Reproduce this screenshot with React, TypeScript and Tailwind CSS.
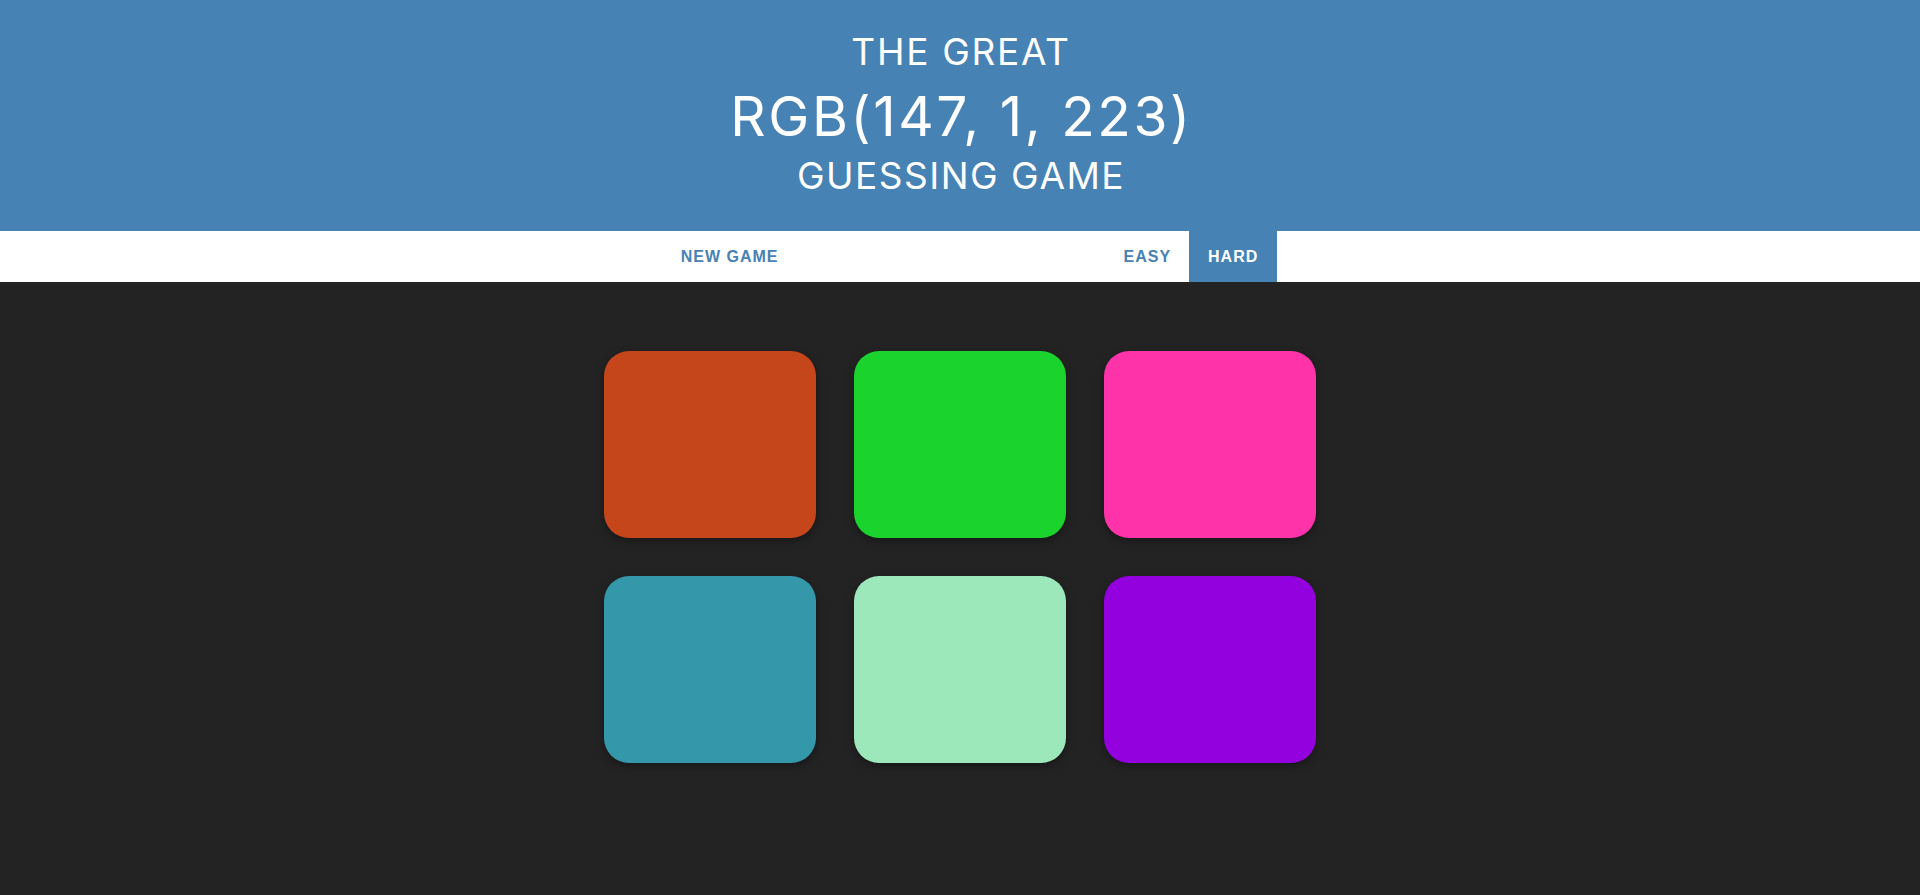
const squares = ["#c5461b", "#1ad32c", "#fe32a9", "#3597aa", "#9de8bb", "#9301df"]

export default function App() {
  return (
    <div className="min-h-[895px] bg-[#232323]">
      <h1 className="h-[231px] bg-[#4682b4] pt-[30px] text-center font-normal uppercase text-white [font-family:Inter,'Liberation_Sans',sans-serif]">
        <span className="block pl-[2px] text-[37px] leading-[44px] tracking-[1.7px]">The Great</span>
        <span className="block pl-[3px] text-[55px] leading-[85px] tracking-[2.6px]">RGB(147, 1, 223)</span>
        <span className="block pl-[2px] text-[37px] leading-[34px] tracking-[1.5px]">Guessing Game</span>
      </h1>

      <div className="flex h-[51px] justify-center bg-white pl-[20px] text-[16px] font-bold uppercase tracking-[1px] text-[#4682b4] [font-family:'Liberation_Sans',Arial,sans-serif]">
        <button className="h-full px-[18px] uppercase">New Game</button>
        <span className="w-[309px]" />
        <button className="h-full px-[18px] uppercase">Easy</button>
        <button className="h-full bg-[#4682b4] px-[19px] uppercase text-white">Hard</button>
      </div>

      <div className="mx-auto mt-[69px] grid w-[712px] grid-cols-3 gap-[38px]">
        {squares.map((c, i) => (
          <div
            key={i}
            className="h-[187px] rounded-[25px] shadow-[0_3px_8px_rgba(0,0,0,0.35)]"
            style={{ backgroundColor: c }}
          />
        ))}
      </div>
    </div>
  )
}
